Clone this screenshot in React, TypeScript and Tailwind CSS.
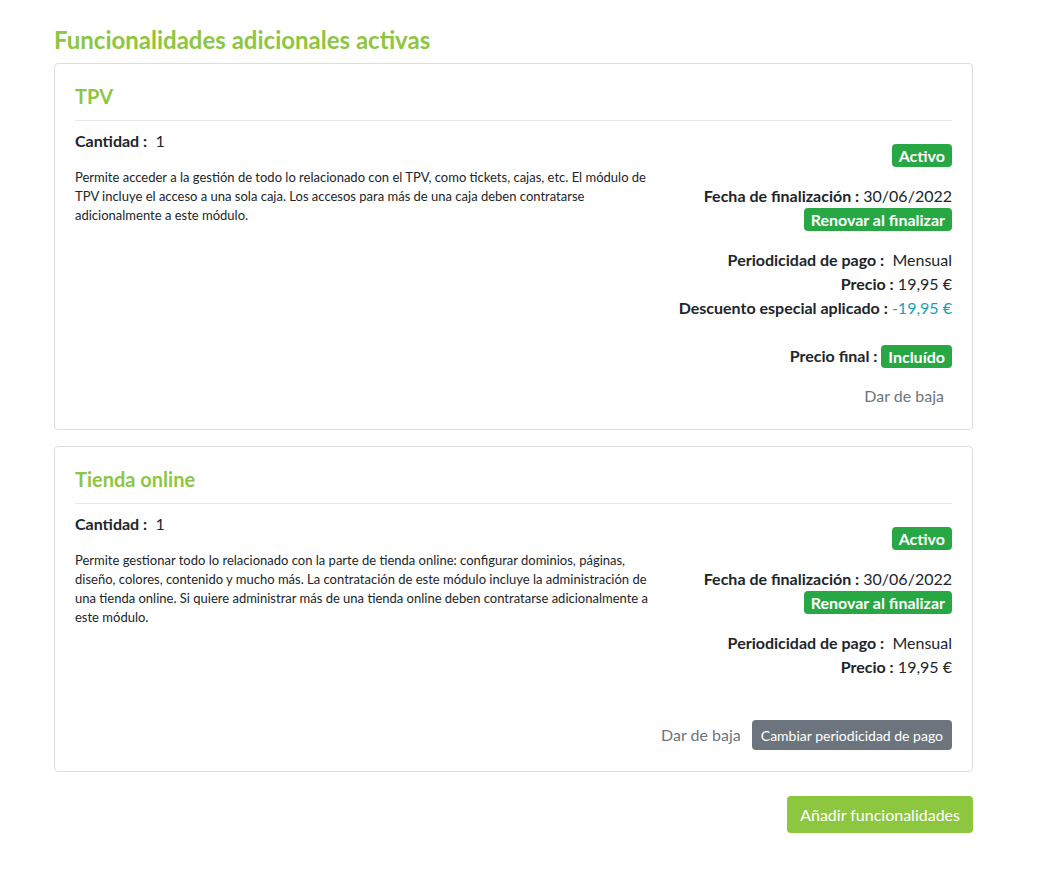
import React from "react";

const Badge = ({ children }: { children: React.ReactNode }) => (
  <span className="inline-block rounded-[4px] bg-[#28a745] px-[7px] text-[16px] font-bold leading-[23px] text-white">
    {children}
  </span>
);

const Line = ({
  label,
  wide,
  children,
}: {
  label: string;
  wide?: boolean;
  children: React.ReactNode;
}) => (
  <div className="text-[16px] leading-[24px] text-[#212529]">
    <span className="font-bold">{label} :</span>
    {wide ? "\u00a0 " : " "}
    {children}
  </div>
);

export default function App() {
  return (
    <div className="min-h-[869px] w-full bg-white font-['Lato',sans-serif] text-[#212529]">
      <div className="ml-[54px] w-[919px] pt-[25px]">
        <h1 className="text-[24px] font-bold leading-[30px] text-[#8dc63f]">
          Funcionalidades adicionales activas
        </h1>

        {/* Card 1 */}
        <div className="mt-[8px] rounded-[4px] border border-[#dcdfe2] px-[20px] pb-[21px] pt-[20px]">
          <h2 className="text-[20px] font-bold leading-[24px] text-[#8dc63f]">TPV</h2>
          <div className="mt-[12px] border-t border-[#e5e8eb]" />
          <div className="mt-[8px] flex">
            <div className="w-[575px]">
              <div className="text-[16px] leading-[24px]">
                <span className="font-bold">Cantidad :</span>&nbsp; 1
              </div>
              <p className="mt-[15px] text-[13px] leading-[19px]">
                Permite acceder a la gestión de todo lo relacionado con el TPV, como tickets, cajas, etc. El módulo de TPV incluye el acceso a una sola caja. Los accesos para más de una caja deben contratarse adicionalmente a este módulo.
              </p>
            </div>
            <div className="flex flex-1 flex-col items-end pt-[15px] text-right">
              <Badge>Activo</Badge>
              <div className="mt-[17px]">
                <Line label="Fecha de finalización">30/06/2022</Line>
              </div>
              <Badge>Renovar al finalizar</Badge>
              <div className="mt-[17px]">
                <Line label="Periodicidad de pago" wide>Mensual</Line>
              </div>
              <Line label="Precio">19,95 €</Line>
              <Line label="Descuento especial aplicado">
                <span className="text-[#17a2b8]">-19,95 €</span>
              </Line>
              <div className="mt-[24px] flex items-center text-[16px] leading-[24px]">
                <span className="font-bold">Precio final :&nbsp;</span>
                <Badge>Incluído</Badge>
              </div>
              <button className="mr-[8px] mt-[16px] text-[16px] leading-[24px] text-[#6c757d]">
                Dar de baja
              </button>
            </div>
          </div>
        </div>

        {/* Card 2 */}
        <div className="mt-[16px] rounded-[4px] border border-[#dcdfe2] px-[20px] pb-[21px] pt-[20px]">
          <h2 className="text-[20px] font-bold leading-[24px] text-[#8dc63f]">Tienda online</h2>
          <div className="mt-[12px] border-t border-[#e5e8eb]" />
          <div className="mt-[8px] flex">
            <div className="w-[575px]">
              <div className="text-[16px] leading-[24px]">
                <span className="font-bold">Cantidad :</span>&nbsp; 1
              </div>
              <p className="mt-[15px] text-[13px] leading-[19px]">
                Permite gestionar todo lo relacionado con la parte de tienda online: configurar dominios, páginas, diseño, colores, contenido y mucho más. La contratación de este módulo incluye la administración de una tienda online. Si quiere administrar más de una tienda online deben contratarse adicionalmente a este módulo.
              </p>
            </div>
            <div className="flex flex-1 flex-col items-end pt-[15px] text-right">
              <Badge>Activo</Badge>
              <div className="mt-[17px]">
                <Line label="Fecha de finalización">30/06/2022</Line>
              </div>
              <Badge>Renovar al finalizar</Badge>
              <div className="mt-[17px]">
                <Line label="Periodicidad de pago" wide>Mensual</Line>
              </div>
              <Line label="Precio">19,95 €</Line>
            </div>
          </div>
          <div className="mt-[41px] flex items-center justify-end gap-[11px]">
            <button className="text-[16px] leading-[24px] text-[#6c757d]">Dar de baja</button>
            <button className="h-[30px] rounded-[4px] bg-[#6c757d] px-[9px] text-[14px] text-white">
              Cambiar periodicidad de pago
            </button>
          </div>
        </div>

        <div className="mt-[24px] flex justify-end">
          <button className="h-[37px] rounded-[4px] bg-[#8dc63f] px-[13px] text-[16px] text-white">
            Añadir funcionalidades
          </button>
        </div>
      </div>
    </div>
  );
}
